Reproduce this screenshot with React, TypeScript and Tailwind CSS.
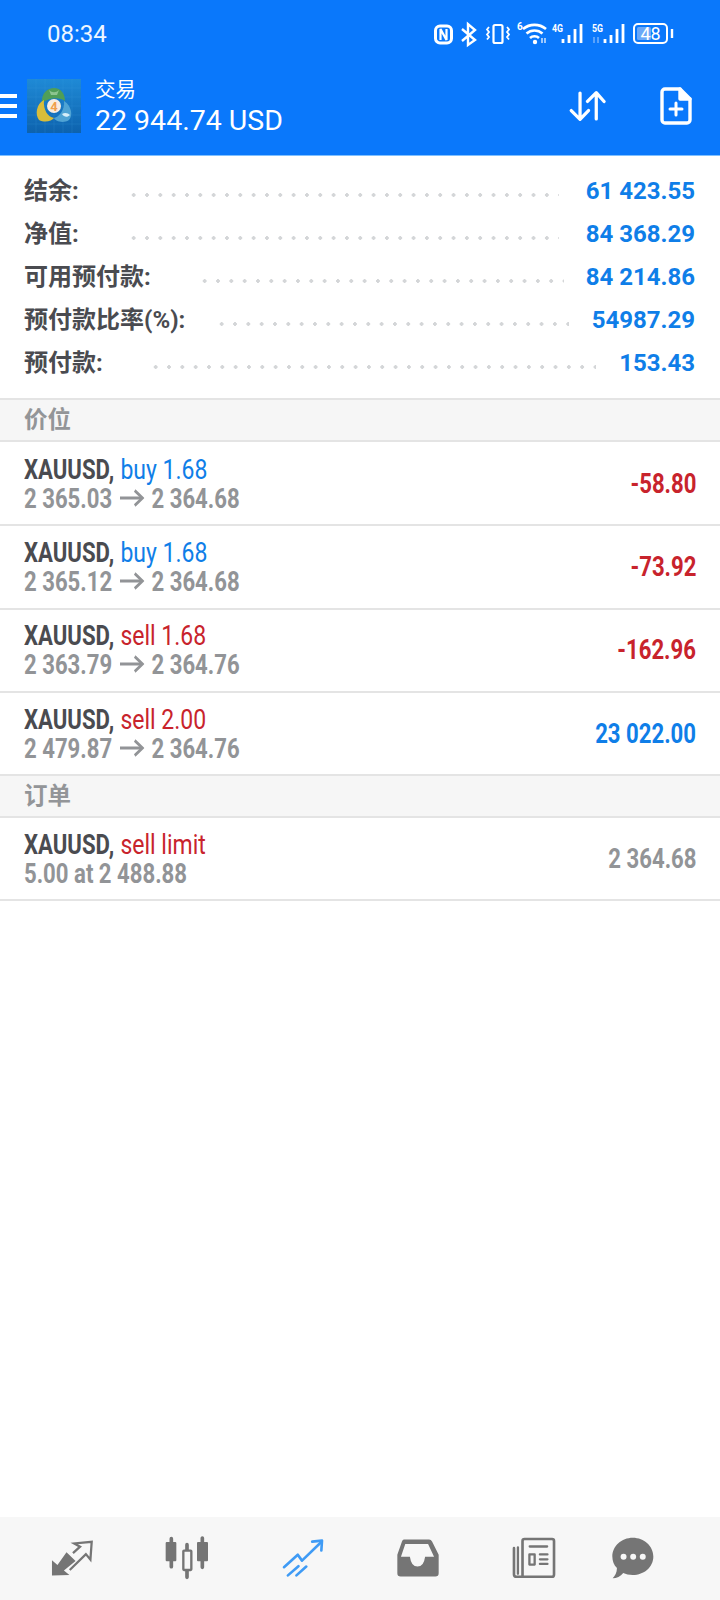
import type { ReactNode } from 'react'

const summary = [
  { label: '结余:', value: '61 423.55', dots: 'ml-[48px] mr-[27px]' },
  { label: '净值:', value: '84 368.29', dots: 'ml-[48px] mr-[27px]' },
  { label: '可用预付款:', value: '84 214.86', dots: 'ml-[47px] mr-[22px]' },
  { label: '预付款比率(%):', value: '54987.29', dots: 'ml-[30px] mr-[23px]' },
  { label: '预付款:', value: '153.43', dots: 'ml-[46px] mr-[23px]' },
]

const positions = [
  { side: 'buy 1.68', from: '2 365.03', to: '2 364.68', profit: '-58.80', sideColor: 'text-[#0f7ee8]', profitColor: 'text-[#c8232c]' },
  { side: 'buy 1.68', from: '2 365.12', to: '2 364.68', profit: '-73.92', sideColor: 'text-[#0f7ee8]', profitColor: 'text-[#c8232c]' },
  { side: 'sell 1.68', from: '2 363.79', to: '2 364.76', profit: '-162.96', sideColor: 'text-[#c8232c]', profitColor: 'text-[#c8232c]' },
  { side: 'sell 2.00', from: '2 479.87', to: '2 364.76', profit: '23 022.00', sideColor: 'text-[#c8232c]', profitColor: 'text-[#0f7ee8]' },
]

function StatusIcons() {
  return (
    <svg width="246" height="30" viewBox="0 0 246 30" className="absolute left-[432px] top-[19px]" fill="none" stroke="white">
      {/* nfc */}
      <rect x="3.5" y="7" width="16" height="17" rx="4.5" strokeWidth="3" />
      <path d="M8.5 21V10l6 11V10" strokeWidth="2.2" />
      {/* bluetooth */}
      <path d="M30 10l13 11-7 5V5l7 6-13 11" strokeWidth="2.4" />
      {/* vibrate */}
      <rect x="61.5" y="6" width="9" height="18" rx="1.5" strokeWidth="2.2" />
      <path d="M57 8l-2 2.5 2 2.5-2 2.5 2 2.5-2 2.5M75 8l2 2.5-2 2.5 2 2.5-2 2.5 2 2.5" strokeWidth="1.8" />
      {/* wifi */}
      <text x="85" y="11" fontSize="10" fontWeight="700" fill="white" stroke="none" fontFamily="Roboto">6</text>
      <path d="M91 10a18 18 0 0 1 23 0M94.5 14.5a12 12 0 0 1 16 0M98 19a6.5 6.5 0 0 1 9 0" strokeWidth="2.6" />
      <circle cx="103" cy="23" r="2.2" fill="white" stroke="none" />
      <path d="M110 24v-5M113 24v-5" strokeWidth="1.2" />
      {/* 4G */}
      <text x="120" y="13" fontSize="11" fontWeight="700" fill="white" stroke="none" fontFamily="Roboto" textLength="11" lengthAdjust="spacingAndGlyphs">4G</text>
      <path d="M131 24v-4M137 24v-8M143 24v-14M149 24v-19" strokeWidth="2.8" />
      {/* 5G */}
      <text x="160" y="13" fontSize="11" fontWeight="700" fill="white" stroke="none" fontFamily="Roboto" textLength="11" lengthAdjust="spacingAndGlyphs">5G</text>
      <path d="M162 24v-6M166 24v-6" strokeWidth="1.4" stroke="#7db5fb" />
      <path d="M173 24v-4M179 24v-8M185 24v-14M191 24v-19" strokeWidth="2.8" />
      {/* battery */}
      <rect x="202" y="5" width="33" height="19" rx="4" strokeWidth="2" />
      <rect x="205" y="8" width="14" height="13" rx="1.5" fill="#6ba8f8" stroke="none" />
      <text x="218.5" y="21" fontSize="18" textAnchor="middle" fill="white" stroke="none" fontFamily="Roboto">48</text>
      <path d="M240 10v9" strokeWidth="2.4" />
    </svg>
  )
}

function Logo() {
  return (
    <svg width="54" height="54" viewBox="0 0 54 54" className="shrink-0">
      <defs>
        <linearGradient id="logoBg" x1="0" y1="0" x2="0" y2="1">
          <stop offset="0" stopColor="#1f8ad6" />
          <stop offset="1" stopColor="#0d62ad" />
        </linearGradient>
      </defs>
      <rect width="54" height="54" fill="url(#logoBg)" />
      <path d="M9 0v54M18 0v54M27 0v54M36 0v54M45 0v54M0 9h54M0 18h54M0 27h54M0 36h54M0 45h54" stroke="#3f9fe0" strokeWidth="0.5" opacity="0.4" />
      <path d="M15 24C14 14 21 9 27 9C34 9 38 15 38 22C33 18 22 18 15 24Z" fill="#4f9e58" />
      <path d="M22 11C25 14 29 14 32 11L30 16H24Z" fill="#8cc58f" />
      <path d="M17 21C9 25 8 36 12 41C18 44 25 42 27 39C21 38 16 31 17 21Z" fill="#d8bd3a" />
      <path d="M37 22C45 27 46 37 42 41C36 45 28 42 27 39C32 38 38 31 37 22Z" fill="#4fa3d4" />
      <path d="M35 35C38 33 41 34 43 36C40 39 37 38 35 35Z" fill="#d7eef9" />
      <circle cx="27" cy="27" r="7" fill="#f8ece0" />
      <text x="27" y="32" fontSize="13" fontWeight="700" textAnchor="middle" fill="#ef9f4d" fontFamily="Roboto">4</text>
    </svg>
  )
}

function SortIcon() {
  return (
    <svg width="37" height="32" viewBox="506 274 114 96" fill="none" stroke="white" strokeWidth="10" strokeLinecap="round" strokeLinejoin="round">
      <path d="M540 282V362M513 336L540 363L566 336" />
      <path d="M590 362V282M563 308L590 281L614 308" />
    </svg>
  )
}

function NewOrderIcon() {
  return (
    <svg width="32" height="38" viewBox="0 0 32 38" fill="none" stroke="white" strokeWidth="3.4" strokeLinejoin="round" strokeLinecap="round">
      <path d="M5 2h15l10 10v21a3 3 0 0 1-3 3H5a3 3 0 0 1-3-3V5a3 3 0 0 1 3-3Z" />
      <path d="M20 2v10h10" fill="white" />
      <path d="M10 22h12M16 16v12" strokeWidth="3" />
    </svg>
  )
}

function PriceArrow() {
  return (
    <svg width="30" height="18" viewBox="0 0 30 18" className="inline-block mx-[9px] align-[1px]" fill="none" stroke="#929497" strokeWidth="3">
      <path d="M0 9H27" />
      <path d="M18 1.5L27.5 9L18 16.5" />
    </svg>
  )
}

function TabQuotes() {
  return (
    <svg width="42" height="38" viewBox="150 85 130 116" fill="none">
      <polygon points="153,197 153,150 170,165 198,125 226,152 190,182 207,196" fill="#757575" />
      <path d="M218 128L240 108 222 98 276 93 272 148 258 131 208 180" stroke="#757575" strokeWidth="7" />
    </svg>
  )
}

function TabChart() {
  return (
    <svg width="44" height="44" viewBox="494 78 132 132" fill="#757575" stroke="#757575" strokeLinecap="round">
      <path d="M513 86v84M606 84v88M560 104v98" fill="none" strokeWidth="11" />
      <rect x="496" y="96" width="32" height="58" rx="3" stroke="none" />
      <rect x="590" y="96" width="33" height="58" rx="3" stroke="none" />
      <rect x="549" y="122" width="24" height="58" rx="2" fill="#f7f7f7" strokeWidth="7" />
    </svg>
  )
}

function TabTrade() {
  return (
    <svg width="42" height="38" viewBox="845 82 126 116" fill="none" stroke="#3f9bf5" strokeWidth="8" strokeLinecap="round" strokeLinejoin="round">
      <path d="M850 168l42-38 13 18 58-56" />
      <path d="M936 90l30-3-2 30" />
      <path d="M862 193l32-28M888 193l30-27" />
    </svg>
  )
}

function TabHistory() {
  return (
    <svg width="42" height="38" viewBox="111 85 127 114">
      <path
        fillRule="evenodd"
        fill="#757575"
        d="M132 86H208Q214 86 217 92L237 132V188Q237 198 227 198H122Q112 198 112 188V132L126 92Q128 86 132 86ZM136 100L123 138H150Q154 168 173 168Q192 168 196 138H223L205 100Z"
      />
    </svg>
  )
}

function TabNews() {
  return (
    <svg width="44" height="42" viewBox="456 78 134 128" fill="none" stroke="#757575" strokeLinecap="round" strokeLinejoin="round">
      <path d="M488 196V90Q488 84 494 84H578Q584 84 584 90V192Q584 199 578 199H470Q462 199 462 192V112" strokeWidth="8" />
      <path d="M474 110V190" strokeWidth="7" />
      <path d="M510 107H563M541 131H564M541 146H564M541 160H564" strokeWidth="7" />
      <rect x="509" y="131" width="16" height="31" strokeWidth="7" />
    </svg>
  )
}

function TabChat() {
  return (
    <svg width="42" height="42" viewBox="755 78 127 127">
      <path d="M818 80C852 80 880 105 880 137C880 169 852 193 818 193C806 193 797 191 789 187C781 197 769 203 757 203C764 196 770 186 770 172C761 163 756 151 756 137C756 105 784 80 818 80Z" fill="#757575" />
      <circle cx="790" cy="138" r="9" fill="#f7f7f7" />
      <circle cx="819" cy="138" r="9" fill="#f7f7f7" />
      <circle cx="848" cy="138" r="9" fill="#f7f7f7" />
    </svg>
  )
}

function SectionHeader({ title }: { title: string }) {
  return (
    <div className="h-[42px] flex items-center px-6 pb-[3px] bg-[#f6f6f6] border-b-2 border-[#e4e4e4] text-[23.5px] leading-none font-bold text-[#939598] font-['Noto_Sans_CJK_SC',sans-serif]">
      {title}
    </div>
  )
}

function TradeRow({ side, sideColor, detail, right, rightColor }: { side: string; sideColor: string; detail: ReactNode; right: string; rightColor: string }) {
  return (
    <div className="h-[83.3px] flex items-center justify-between pl-6 pr-6 pt-[1px] border-b-2 border-[#e4e4e4] font-['Roboto',sans-serif]">
      <div className="origin-left scale-x-[0.82] whitespace-nowrap">
        <div className="text-[27px] leading-[29px] text-[#4a4b50]">
          <span className="font-bold">XAUUSD, </span>
          <span className={`ml-px text-[28px] ${sideColor}`}>{side}</span>
        </div>
        <div className="text-[27px] leading-[29px] font-bold text-[#929497]">{detail}</div>
      </div>
      <div className={`origin-right scale-x-[0.82] whitespace-nowrap text-[27px] font-bold ${rightColor}`}>{right}</div>
    </div>
  )
}

export default function App() {
  return (
    <div className="min-h-[1600px] flex flex-col bg-white font-['Roboto',sans-serif]">
      <header className="relative h-[156px] shrink-0 bg-[#0a78fb] text-white border-b border-[#7fc0ff]">
        <div className="h-[67px] pl-[47px] pt-[19px] text-[24px] leading-[30px] text-[#eef6ff]">08:34</div>
        <StatusIcons />
        <div className="flex items-center h-[88px] pb-[11px]">
          <div className="w-[17px] flex flex-col gap-[6px] shrink-0">
            <div className="h-1 bg-white" />
            <div className="h-1 bg-white" />
            <div className="h-1 bg-white" />
          </div>
          <div className="ml-[10px]">
            <Logo />
          </div>
          <div className="ml-[14px]">
            <div className="text-[20.5px] leading-[26px] pt-[1px] font-['Noto_Sans_CJK_SC',sans-serif]">交易</div>
            <div className="text-[28.5px] leading-[34px] mt-[3px]">22 944.74 USD</div>
          </div>
          <div className="ml-auto flex items-center mr-[28px] gap-[54px]">
            <SortIcon />
            <NewOrderIcon />
          </div>
        </div>
      </header>

      <section className="h-[244px] shrink-0 pt-[14px] border-b-2 border-[#e4e4e4]">
        {summary.map((row) => (
          <div key={row.label} className="h-[42.8px] flex items-center pl-6 pr-[25px]">
            <span className="text-[24px] font-bold text-[#4a4b50] whitespace-nowrap font-['Roboto','Noto_Sans_CJK_SC',sans-serif]">{row.label}</span>
            <div className={`flex-1 h-1 mt-2 bg-[radial-gradient(circle,#d4d6d8_1.6px,transparent_2px)] bg-[length:13.33px_4px] bg-repeat-x ${row.dots}`} />
            <span className="text-[24px] font-bold text-[#0f7ee8] whitespace-nowrap">{row.value}</span>
          </div>
        ))}
      </section>

      <SectionHeader title="价位" />
      <div className="h-[1px] shrink-0" />
      {positions.map((p) => (
        <TradeRow
          key={p.from}
          side={p.side}
          sideColor={p.sideColor}
          detail={
            <>
              {p.from}
              <PriceArrow />
              {p.to}
            </>
          }
          right={p.profit}
          rightColor={p.profitColor}
        />
      ))}

      <SectionHeader title="订单" />
      <TradeRow side="sell limit" sideColor="text-[#c8232c]" detail="5.00 at 2 488.88" right="2 364.68" rightColor="text-[#929497]" />

      <nav className="mt-auto h-[83px] shrink-0 bg-[#f7f7f7] flex items-center pl-[14px] pb-[2px]">
        <div className="w-[115.5px] flex justify-center"><TabQuotes /></div>
        <div className="w-[115.5px] flex justify-center"><TabChart /></div>
        <div className="w-[115.5px] flex justify-center"><TabTrade /></div>
        <div className="w-[115.5px] flex justify-center"><TabHistory /></div>
        <div className="w-[115.5px] flex justify-center"><TabNews /></div>
        <div className="w-[82px] flex justify-center"><TabChat /></div>
      </nav>
    </div>
  )
}
